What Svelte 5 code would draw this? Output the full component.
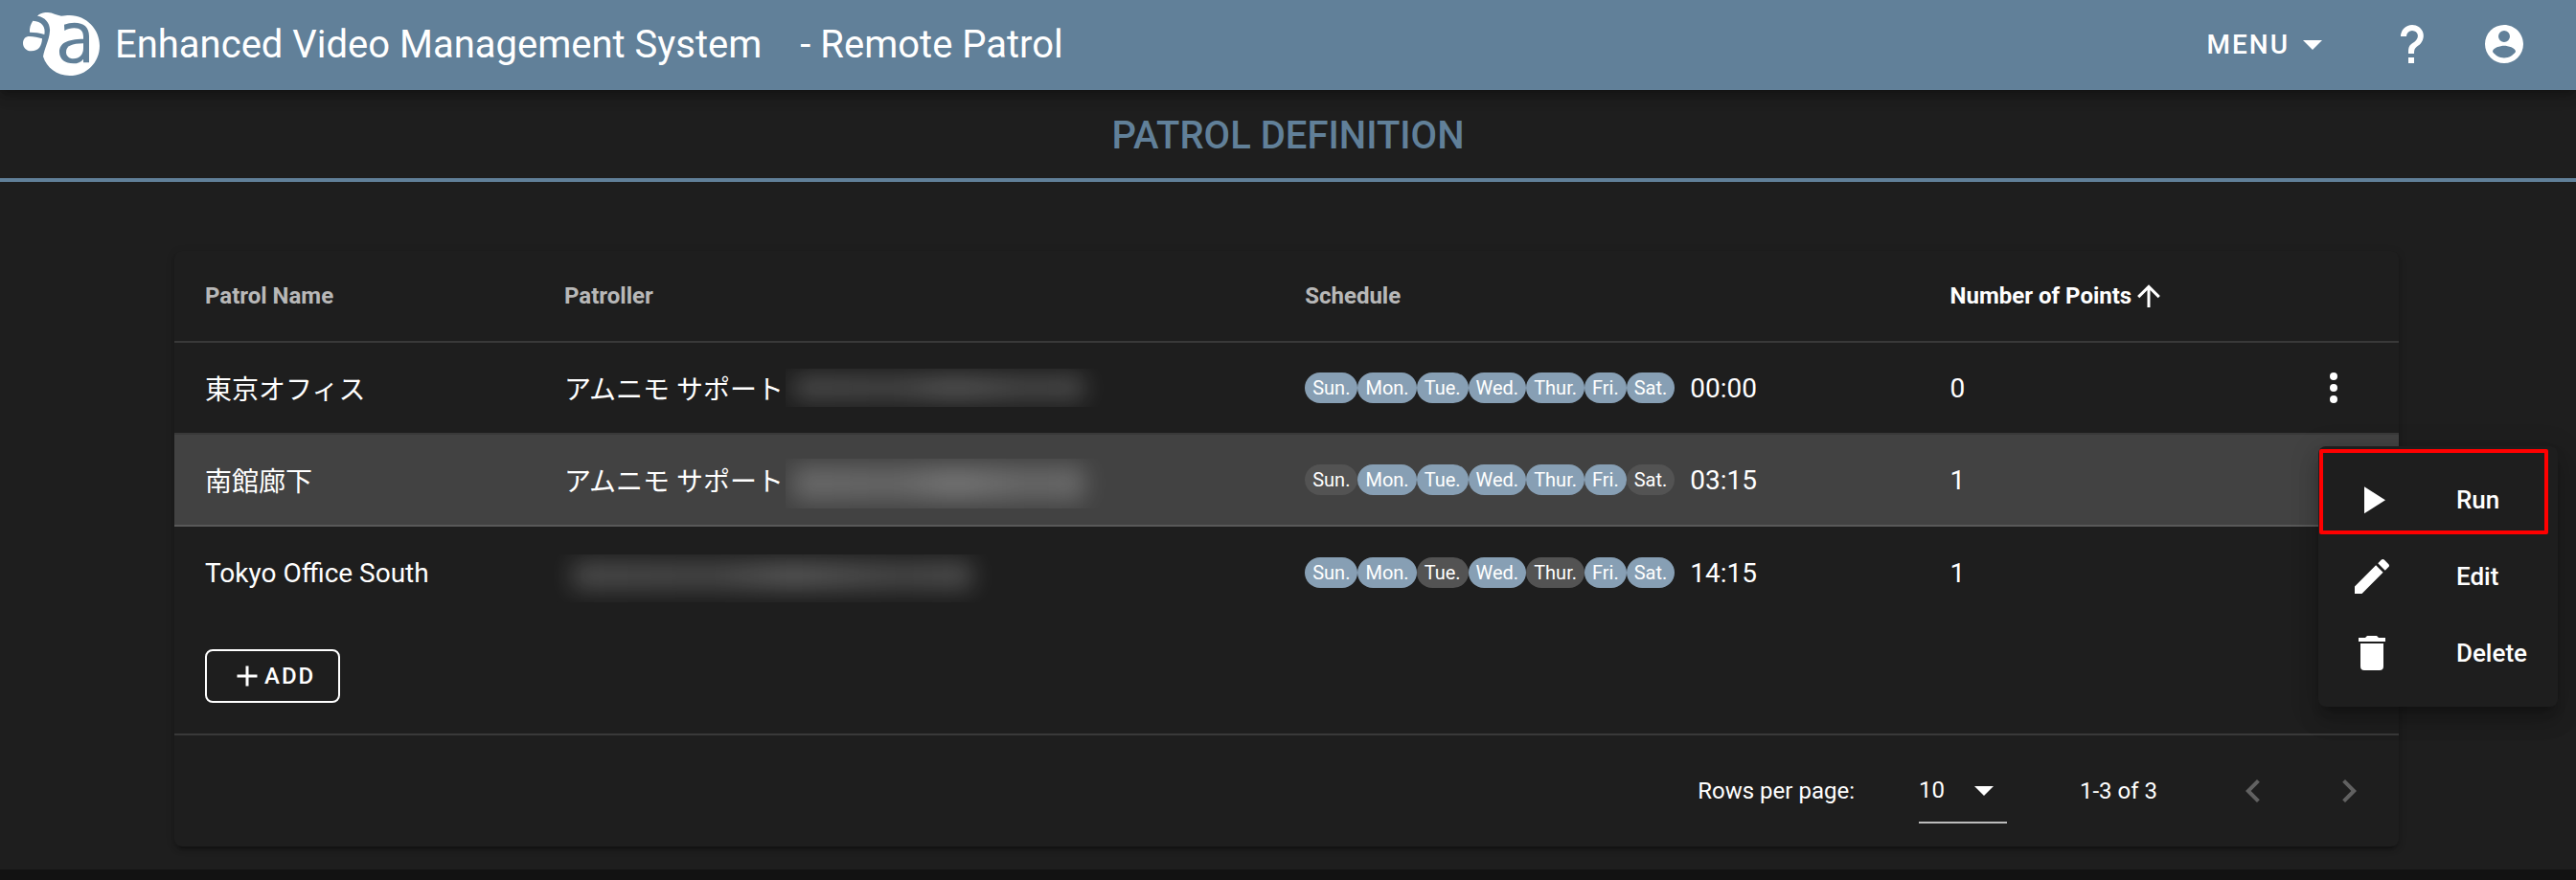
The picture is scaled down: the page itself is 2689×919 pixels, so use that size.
<script>
  const days = ['Sun.', 'Mon.', 'Tue.', 'Wed.', 'Thur.', 'Fri.', 'Sat.'];

  const patrols = [
    { name: '東京オフィス', patroller: 'アムニモ サポート', mask: 'short', active: [1, 1, 1, 1, 1, 1, 1], time: '00:00', points: 0 },
    { name: '南館廊下', patroller: 'アムニモ サポート', mask: 'tall', active: [0, 1, 1, 1, 1, 1, 0], time: '03:15', points: 1 },
    { name: 'Tokyo Office South', patroller: '', mask: 'wide', active: [1, 1, 0, 1, 0, 1, 1], time: '14:15', points: 1 }
  ];

  const actions = [
    { label: 'Run', icon: 'M8 5.14V19.14L19 12.14L8 5.14Z' },
    { label: 'Edit', icon: 'M20.71 7.04C21.1 6.65 21.1 6 20.71 5.63L18.37 3.29C18 2.9 17.35 2.9 16.96 3.29L15.12 5.12L18.87 8.87M3 17.25V21H6.75L17.81 9.93L14.06 6.18L3 17.25Z' },
    { label: 'Delete', icon: 'M19 4H15.5L14.5 3H9.5L8.5 4H5V6H19M6 19A2 2 0 0 0 8 21H16A2 2 0 0 0 18 19V7H6V19Z' }
  ];

  const openRow = 1;
  let perPage = $state('10');
</script>

<div class="page">
  <header>
    <svg class="logo" viewBox="72 39 240 198" aria-hidden="true">
      <path fill="#fff" d="M117 50C124 42 136 38 150 39C166 40 176 48 192 50C202 50 208 48 218 48C271 48 312 92 312 143C312 196 271 237 218 237C178 237 146 212 135 177C139 152 154 126 156 98C158 74 142 53 117 50Z" />
      <path fill="#fff" d="M103 65C130 66 144 84 139 108C124 103 109 101 93 101C92 87 96 75 103 65Z" />
      <path fill="#fff" d="M92 114C106 115 120 117 132 121C131 144 121 160 98 160C81 160 72 148 72 135C72 122 80 114 92 114Z" />
      <path fill="#618099" d="M201 77C211 73 222 71 233 71C263 71 279 85 279 113V196H261V185C253 195 244 199 230 199C204 199 186 186 186 163C186 135 209 123 261 122V115C261 97 251 88 232 88C221 88 211 91 202 96Z" />
      <path fill="#fff" d="M261 136C225 136 207 144 207 163C207 176 216 184 230 184C249 184 261 171 261 151Z" />
    </svg>
    <h1>Enhanced Video Management System</h1>
    <span class="product">- Remote Patrol</span>
    <nav>
      <button class="menu-button">
        MENU
        <svg class="icon" viewBox="0 0 24 24" aria-hidden="true"><path d="M7 10L12 15L17 10H7Z" /></svg>
      </button>
      <button class="nav-icon" aria-label="Help">
        <svg class="icon" viewBox="0 0 24 24" aria-hidden="true"><path d="M10 19H13V22H10V19M12 2C17.35 2.22 19.68 7.62 16.5 11.67C15.67 12.67 14.33 13.33 13.67 14.17C13 15 13 16 13 17H10C10 15.33 10 13.92 10.67 12.92C11.33 11.92 12.67 11.33 13.5 10.67C15.92 8.43 15.32 5.26 12 5A3 3 0 0 0 9 8H6A6 6 0 0 1 12 2Z" /></svg>
      </button>
      <button class="nav-icon" aria-label="Account">
        <svg class="icon" viewBox="0 0 24 24" aria-hidden="true"><path d="M12 19.2C9.5 19.2 7.29 17.92 6 16C6.03 14 10 12.9 12 12.9C14 12.9 17.97 14 18 16C16.71 17.92 14.5 19.2 12 19.2M12 5A3 3 0 0 1 15 8A3 3 0 0 1 12 11A3 3 0 0 1 9 8A3 3 0 0 1 12 5M12 2A10 10 0 0 0 2 12A10 10 0 0 0 12 22A10 10 0 0 0 22 12C22 6.47 17.5 2 12 2Z" /></svg>
      </button>
    </nav>
  </header>

  <h2>PATROL DEFINITION</h2>

  <main>
    <table>
      <colgroup>
        <col class="c-name" /><col class="c-patroller" /><col class="c-schedule" /><col class="c-points" /><col />
      </colgroup>
      <thead>
        <tr>
          <th>Patrol Name</th>
          <th>Patroller</th>
          <th>Schedule</th>
          <th class="sorted" aria-sort="ascending">
            <span class="sort">Number of Points<svg class="icon small" viewBox="0 0 24 24" aria-hidden="true"><path d="M13 20H11V8L5.5 13.5L4.08 12.08L12 4.16L19.92 12.08L18.5 13.5L13 8V20Z" /></svg></span>
          </th>
          <th></th>
        </tr>
      </thead>
      <tbody>
        {#each patrols as patrol, i}
          <tr class:selected={i === openRow}>
            <td>{patrol.name}</td>
            <td>
              <div class="person">{patrol.patroller}<span class="mask {patrol.mask}"></span></div>
            </td>
            <td>
              <div class="schedule">
                {#each days as day, d}
                  <span class="chip" class:on={patrol.active[d]}>{day}</span>
                {/each}
                <span class="time">{patrol.time}</span>
              </div>
            </td>
            <td>{patrol.points}</td>
            <td class="row-actions">
              <button class="dots" aria-label="Actions">
                <svg class="icon" viewBox="0 0 24 24" aria-hidden="true"><path d="M12 16A2 2 0 0 1 14 18A2 2 0 0 1 12 20A2 2 0 0 1 10 18A2 2 0 0 1 12 16M12 10A2 2 0 0 1 14 12A2 2 0 0 1 12 14A2 2 0 0 1 10 12A2 2 0 0 1 12 10M12 4A2 2 0 0 1 14 6A2 2 0 0 1 12 8A2 2 0 0 1 10 6A2 2 0 0 1 12 4Z" /></svg>
              </button>
              {#if i === openRow}
                <div class="popup">
                  {#each actions as action, a}
                    <button class:marked={a === 0}>
                      <svg class="icon" viewBox="0 0 24 24" aria-hidden="true"><path d={action.icon} /></svg>
                      {action.label}
                    </button>
                  {/each}
                </div>
              {/if}
            </td>
          </tr>
        {/each}
      </tbody>
    </table>

    <div class="add-bar">
      <button class="add">
        <svg class="icon small" viewBox="0 0 24 24" aria-hidden="true"><path d="M19 13H13V19H11V13H5V11H11V5H13V11H19V13Z" /></svg>ADD
      </button>
    </div>

    <footer>
      <label for="per-page">Rows per page:</label>
      <div class="select">
        <select id="per-page" bind:value={perPage}>
          <option>10</option>
          <option>25</option>
          <option>50</option>
        </select>
        <svg class="icon" viewBox="0 0 24 24" aria-hidden="true"><path d="M7 10L12 15L17 10H7Z" /></svg>
      </div>
      <span class="range">1-3 of 3</span>
      <div class="pager">
        <button disabled aria-label="Previous page">
          <svg class="icon" viewBox="0 0 24 24" aria-hidden="true"><path d="M15.41 16.58L10.83 12L15.41 7.41L14 6L8 12L14 18L15.41 16.58Z" /></svg>
        </button>
        <button disabled aria-label="Next page">
          <svg class="icon" viewBox="0 0 24 24" aria-hidden="true"><path d="M8.59 16.58L13.17 12L8.59 7.41L10 6L16 12L10 18L8.59 16.58Z" /></svg>
        </button>
      </div>
    </footer>
  </main>
</div>

<style>
  :global(body) {
    margin: 0;
    background: #121212;
  }

  .page {
    display: flow-root;
    padding-bottom: 24px;
    background: #1e1e1e;
    color: #fff;
    font-family: Roboto, 'Noto Sans CJK JP', sans-serif;
    font-size: 28px;
  }

  button,
  select {
    margin: 0;
    padding: 0;
    border: 0;
    background: none;
    color: inherit;
    font: inherit;
  }

  .icon {
    display: block;
    flex: none;
    width: 48px;
    height: 48px;
    fill: currentColor;
  }

  .icon.small {
    width: 36px;
    height: 36px;
  }

  header {
    position: relative;
    display: flex;
    align-items: center;
    height: 94px;
    box-sizing: border-box;
    padding: 0 27px 2px 24px;
    background: #618099;
    box-shadow: 0 4px 8px -2px #0003, 0 8px 10px #0002, 0 2px 20px #0002;
  }

  .logo {
    width: 80px;
    height: 66px;
  }

  h1,
  .product {
    margin: 0 0 0 16px;
    padding-top: 2px;
    font-size: 40px;
    font-weight: 400;
    line-height: 64px;
    white-space: nowrap;
  }

  .product {
    margin-left: 40px;
  }

  nav {
    display: flex;
    margin-left: auto;
  }

  .menu-button {
    display: flex;
    align-items: center;
    padding: 0 32px;
    font-weight: 500;
    letter-spacing: 2px;
  }

  .nav-icon {
    padding: 24px;
  }

  h2 {
    margin: 0;
    padding: 18px 0 14px;
    border-bottom: 4px solid #618099;
    color: #618099;
    font-size: 40px;
    font-weight: 500;
    line-height: 60px;
    text-align: center;
  }

  main {
    margin: 72px 185px 0 182px;
    border-radius: 8px;
    background: #1e1e1e;
    box-shadow: 0 6px 2px -4px #0003, 0 4px 4px #0002, 0 2px 10px #0002;
  }

  table {
    width: 100%;
    table-layout: fixed;
    border-spacing: 0;
  }

  .c-name {
    width: 16.15%;
  }

  .c-patroller {
    width: 33.3%;
  }

  .c-schedule {
    width: 29%;
  }

  .c-points {
    width: 13%;
  }

  th,
  td {
    box-sizing: border-box;
    height: 96px;
    padding: 0 32px;
    border-bottom: 2px solid #ffffff1f;
    text-align: left;
    white-space: nowrap;
  }

  tbody tr:last-child td {
    border-bottom: 0;
  }

  th {
    color: #ffffffb3;
    font-size: 24px;
    font-weight: 700;
  }

  th.sorted {
    color: #fff;
  }

  .sort,
  .person,
  .schedule {
    display: flex;
    align-items: center;
  }

  .selected td {
    background: #424242;
  }

  .mask {
    position: relative;
    width: 340px;
    height: 40px;
    margin-left: 2px;
    overflow: hidden;
  }

  .mask::before {
    content: '';
    position: absolute;
    inset: 8px 28px 8px 8px;
    border-radius: 8px;
    background: linear-gradient(90deg, #ffffff36, #ffffff30 35%, #ffffff44 55%, #ffffff30 82%, #ffffff38);
    filter: blur(12px);
  }

  .mask.tall {
    height: 52px;
    margin-top: 8px;
  }

  .mask.wide {
    width: 466px;
    height: 50px;
    margin: 12px 0 0 -16px;
  }

  .mask.wide::before {
    inset: 8px 24px 14px;
  }

  .chip {
    padding: 0 8px;
    border-radius: 16px;
    background: #535353;
    font-size: 20px;
    line-height: 32px;
  }

  .chip.on {
    background: #879fb4;
  }

  .time {
    margin-left: 16px;
  }

  .row-actions {
    position: relative;
  }

  .dots {
    display: block;
    margin-left: auto;
    padding: 12px;
  }

  .popup {
    position: absolute;
    z-index: 1;
    top: 12px;
    right: -166px;
    padding: 16px 0;
    border-radius: 8px;
    background: #1e1e1e;
    box-shadow: 0 10px 10px -6px #0003, 0 16px 20px 2px #0002, 0 6px 28px 4px #0002;
  }

  .popup button {
    position: relative;
    display: flex;
    align-items: center;
    gap: 64px;
    width: 100%;
    height: 80px;
    padding: 0 32px;
    font-size: 26px;
    font-weight: 500;
  }

  .marked::after {
    content: '';
    position: absolute;
    inset: -13px 10px 4px 1px;
    border: 4px solid #f00;
    border-radius: 2px;
  }

  .add-bar {
    padding: 32px;
    border-bottom: 2px solid #ffffff1f;
  }

  .add {
    display: flex;
    align-items: center;
    height: 56px;
    padding: 0 24px;
    border: 2px solid #fff;
    border-radius: 8px;
    font-size: 24px;
    font-weight: 500;
    letter-spacing: 2px;
  }

  footer {
    display: flex;
    align-items: center;
    justify-content: flex-end;
    height: 116px;
    padding-right: 16px;
    font-size: 24px;
  }

  .select {
    position: relative;
    margin: 0 76px 0 67px;
    border-bottom: 2px solid #ffffffb3;
  }

  select {
    display: block;
    width: 92px;
    height: 66px;
    appearance: none;
  }

  .select .icon {
    position: absolute;
    top: 9px;
    right: 0;
    pointer-events: none;
  }

  .pager {
    display: flex;
    gap: 28px;
    margin-left: 64px;
  }

  .pager button {
    padding: 12px;
    color: #ffffff4d;
  }
</style>
